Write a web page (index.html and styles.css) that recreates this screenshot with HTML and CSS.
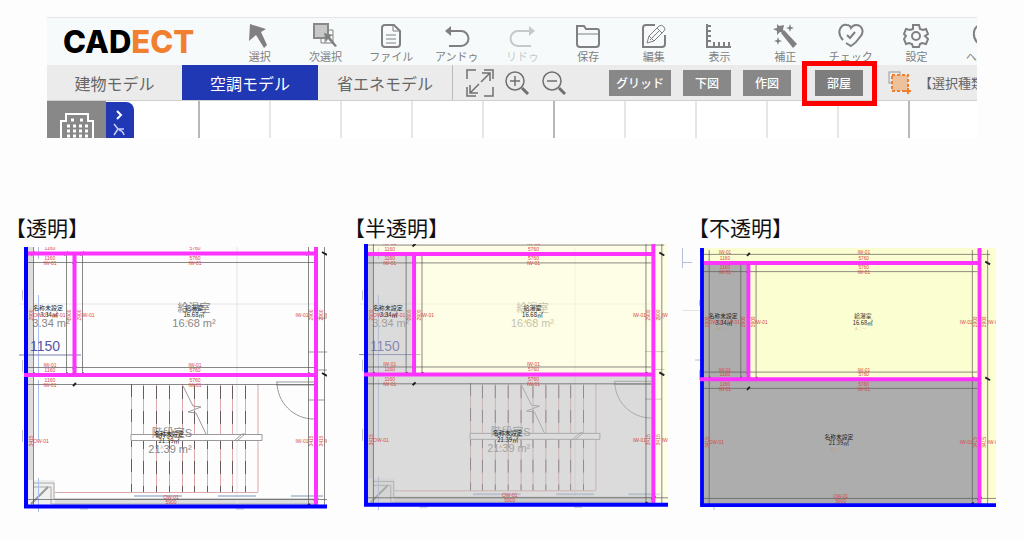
FILE: index.html
```html
<!DOCTYPE html>
<html lang="ja">
<head>
<meta charset="utf-8">
<title>CADECT</title>
<link rel="stylesheet" href="styles.css">
</head>
<body>
<section class="app">
  <header class="topbar">
    <h1 class="logo">CAD<span class="logo-accent">ECT</span></h1>
    <nav class="tools">
      <button class="tool"><svg class="tool-icon" viewBox="0 0 26 26"><path d="M3 1 19 6 14 9 20 22 17 25 9 12 2 18Z" class="solid"/></svg>選択</button>
      <button class="tool"><svg class="tool-icon" viewBox="0 0 26 26"><path d="M9 13v7h12V7h-4M13 20v-8h8" class="thin"/><rect x="2" y="1" width="14" height="14" fill="#c8c8c8" stroke="#888" stroke-width="2"/><path d="M12 10l8 2-2 2 7 9-2 1-7-8-2 3Z" class="solid"/></svg>次選択</button>
      <button class="tool"><svg class="tool-icon" viewBox="0 0 26 26"><path d="M7 2h9l6 6v13a3 3 0 0 1-3 3H7a3 3 0 0 1-3-3V5a3 3 0 0 1 3-3Z" class="line"/><path d="M15 2v6h6M8 12h10M8 16h10M8 20h10" class="thin"/></svg>ファイル</button>
      <button class="tool"><svg class="tool-icon" viewBox="0 0 26 26"><path d="M5 8h12a7 7 0 0 1 0 15H5" class="line"/><path d="M1 8 7 3v10Z" class="solid"/></svg>アンドゥ</button>
      <button class="tool tool-off" disabled><svg class="tool-icon" viewBox="0 0 26 26"><path d="M21 8H9a7 7 0 0 0 0 15h13" class="line"/><path d="M26 8 20 3v10Z" class="solid"/></svg>リドゥ</button>
      <button class="tool"><svg class="tool-icon" viewBox="0 0 26 26"><path d="M2 21V3h7l2 3h11a2 2 0 0 1 2 2v13a3 3 0 0 1-3 3H5a3 3 0 0 1-3-3Z" class="line"/><path d="M2 11h22" class="thin"/></svg>保存</button>
      <button class="tool"><svg class="tool-icon" viewBox="0 0 26 26"><path d="M14 2H5a3 3 0 0 0-3 3v19h19a3 3 0 0 0 3-3v-9" class="line"/><path d="M6 20l2-7L18 3q3-2 5 1 2 2 0 4L13 18ZM16 5l5 5M8 13l5 5M9 17l9-9" class="thin"/></svg>編集</button>
      <button class="tool"><svg class="tool-icon" viewBox="0 0 26 26"><path d="M1 1v23h24M1 3h4M1 8h4M1 13h4M1 18h4M8 24v-5M13 24v-5M18 24v-5M23 24v-5" class="line"/></svg>表示</button>
      <button class="tool"><svg class="tool-icon" viewBox="0 0 26 26"><path d="M9 10 12 7 25 21 21 25Z" class="solid"/><path d="M5 1l2 2 5-1-1 5 2 3-5-1-3 3V8L1 6l4-1ZM18 1l1 3 3 1-3 1-1 3-1-3-3-1 3-1ZM6 14l1 3 3 1-3 1-1 3-1-3-3-1 3-1Z" class="solid"/></svg>補正</button>
      <button class="tool"><svg class="tool-icon" viewBox="0 0 26 26"><path d="M5 17C-3 8 4 1 9 2q3 0 4 3 2-3 5-3c6 0 9 7 4 12q-4 6-9 9l-5-3" class="line"/><path d="M9 12l3 3 5-6" class="line"/></svg>チェック</button>
      <button class="tool"><svg class="tool-icon" viewBox="0 0 26 26"><path d="M10 2h6l1 4 3 1 3-1 2 5-3 2 3 3-2 5-4-1-2 1-1 3h-6l-1-3-3-1-3 1-2-5 2-3-2-2 2-5 4 1 3-1Z" class="line"/><circle cx="13" cy="13" r="4" class="line"/></svg>設定</button>
      <button class="tool"><svg class="tool-icon" viewBox="0 0 26 26"><path d="M9 24v-4C3 15 3 2 13 2s10 13 4 18v4Z" class="line"/></svg>ヘルプ</button>
    </nav>
  </header>
  <div class="modebar">
    <button class="tab">建物モデル</button>
    <button class="tab tab-active">空調モデル</button>
    <button class="tab tab-last">省エネモデル</button>
    <div class="views">
      <button class="view" aria-label="全体表示"><svg viewBox="0 0 28 28"><path d="M1 10V1h9M18 1h9v9M1 18v9h9M27 18v9h-9M15 13 24 4M16 4h8v8M13 15l-9 9M4 16v8h8"/></svg></button>
      <button class="view" aria-label="拡大"><svg viewBox="0 0 28 28"><circle cx="12" cy="12" r="9"/><path d="M7 12h10M12 7v10"/><path d="M19 19l6 6" stroke-width="3"/></svg></button>
      <button class="view" aria-label="縮小"><svg viewBox="0 0 28 28"><circle cx="12" cy="12" r="9"/><path d="M7 12h10"/><path d="M19 19l6 6" stroke-width="3"/></svg></button>
    </div>
    <div class="layers">
      <button class="layer layer-wide">グリッド</button>
      <button class="layer">下図</button>
      <button class="layer">作図</button>
      <button class="layer layer-marked">部屋</button>
    </div>
    <svg class="pick" viewBox="0 0 23 24"><rect x="1" y="1" width="11" height="11" fill="none" stroke="#999"/><rect x="4" y="4" width="16" height="16" fill="#ecc29c" stroke="#f08030" stroke-width="2" stroke-dasharray="3 2"/><path d="M17 20h6M20 17v6" stroke="#f08030" stroke-width="2"/></svg>
    <span class="pick-label">【選択種類</span>
  </div>
  <div class="stage">
    <div class="side"><svg class="building" viewBox="0 0 36 27"><path d="M2 27V9h5V2h22v7h5v18" fill="none" stroke="#fff" stroke-width="2"/><path d="M12 8h3M21 8h3M8 14h3M14 14h3M20 14h3M26 14h3M8 19h3M14 19h3M20 19h3M26 19h3M8 24h3M14 24h3M20 24h3M26 24h3" stroke="#fff" stroke-width="3"/></svg></div>
    <button class="drawer" aria-label="メニューを開く"><svg viewBox="0 0 28 36"><path d="M11 9l4 4-4 4" fill="none" stroke="#fff" stroke-width="2"/><path d="M8 22l4 5h6M12 27l-4 6M13 28q4 1 5 5" fill="none" stroke="#c8cff5" stroke-width="1.500"/></svg></button>
    <div class="gridlines"><i class="major"></i><i></i><i></i><i></i><i></i><i class="major"></i><i></i><i></i><i></i><i></i><i class="major"></i></div>
  </div>
</section>

<main class="samples">
  <figure class="sample">
    <figcaption>【透明】</figcaption>
    <svg class="plan" viewBox="5 244 339 270">
      <defs>
        <clipPath id="c1"><rect x="16" y="247" width="311" height="265"/></clipPath>
        <clipPath id="c2"><rect x="355" y="244" width="313" height="268"/></clipPath>
        <clipPath id="c3"><rect x="700" y="248" width="296" height="264"/></clipPath>
        <g id="under" fill="none" stroke="#777" stroke-width="1">
          <path d="M28 247h5v252h281v6H28Z" fill="#dedede" stroke="none"/>
          <path d="M28 480h27v25H28Z" fill="#f0f0f0" stroke="none"/>
          <path d="M33 483h21v16h260M33 487h18v17h263" stroke="#aaa"/>
          <path d="M237 247v257M20 304h294" stroke="#e4e4e4"/>
          <path d="M31 504 48 487" stroke="#999" stroke-width="2"/>
          <path d="M38.500 247v12M38.500 295v80M38.500 380v60M38.500 478v34" stroke="#aac0ec"/>
          <path d="M19 355h62" stroke="#777fb0"/>
          <path d="M134 496h48M218 496h38M291 496h32" stroke="#bac9dc" stroke-width="2"/>
          <path d="M55 492.500h203M131.500 384v108M143.500 384v108M156.500 384v108M169.500 384v108M182.500 384v108M194.500 384v108M207.500 384v108M220.500 384v108M232.500 384v108M245.500 384v108M258 384v108" stroke="#dcaaaa"/>
          <path d="M131.500 384v108M143.500 386v106M156.500 386v106M169.500 386v106M182.500 386v106M194.500 386v106M207.500 386v106M220.500 386v106M232.500 386v106M245.500 386v106" stroke="#6a5a60" stroke-dasharray="13 12"/>
          <path d="M131 434.500h131v6H131Z" fill="#fff" stroke="#999"/>
          <path d="M234 441l8-7h3l-8 7" stroke="#999"/>
          <path d="M183 386l10 20 8 1-13 5 8 1 10 21M276 382h38M276 385h38M277 382c0 20 16 37 37 37M308 400h16M308 352h19M318 318h9M318 370h9" stroke="#999"/>
          <path d="M22.500 290v10M22.500 360v12M22.500 430v12M80 509h8M236 509h8" stroke="#c0c0d0"/>
        </g>
        <g id="dims">
          <path d="M26 244.500h301M26 262.500h288M26 367.500h288M26 384.500h288M33.500 240v266M66.500 253v122M82.500 253v122M308.500 240v266M324.500 240v266M28 499.500h306" fill="none" stroke="#555" stroke-width="1" opacity=".7"/>
          <path d="M73 246l3-3M73 264l3-3M73 369l3-3M73 386l3-3M64 255l4-3M64 376l4-3M80 255l4-3M80 376l4-3M31 255l4-3M31 376l4-3M306 255l4-3M306 376l4-3M322 252l5 3M322 373l5 3M314 501l4-3M306 507l4-3" stroke="#222" stroke-width="2"/>
        </g>
        <g id="walls" fill="none" stroke-width="4">
          <path d="M26 240v266" stroke="#0000ff"/>
          <path d="M28 253.500H316M24 375H316M74.500 254V375M316 240V506" stroke="#ff33ff"/>
          <path d="M24 506.500H334" stroke="#0000ff"/>
        </g>
        <g id="marks" class="marks">
          <text x="50" y="244">IW-01</text><text x="50" y="250">1160</text><text x="50" y="260">1160</text><text x="50" y="265">IW-01</text>
          <text x="195" y="244">IW-01</text><text x="195" y="250">5760</text><text x="195" y="260">5760</text><text x="195" y="265">IW-01</text>
          <text x="50" y="367">IW-01</text><text x="50" y="372">1160</text><text x="50" y="382">1160</text><text x="50" y="387">IW-01</text>
          <text x="195" y="367">IW-01</text><text x="195" y="372">5760</text><text x="195" y="382">5760</text><text x="195" y="387">IW-01</text>
          <text x="171" y="499">OW-01</text><text x="171" y="504">5900</text>
          <text x="41" y="317">OW-01</text><text x="59" y="317">IW-01</text><text x="88" y="317">IW-01</text><text x="302" y="317">IW-01</text><text x="331" y="317">IW-01</text>
          <text x="41" y="443">OW-01</text><text x="302" y="443">IW-01</text><text x="331" y="443">IW-01</text>
          <text transform="translate(33 315) rotate(-90)">2900</text><text transform="translate(71 315) rotate(-90)">2900</text><text transform="translate(81 315) rotate(-90)">2900</text><text transform="translate(313 315) rotate(-90)">2900</text><text transform="translate(323 315) rotate(-90)">2900</text>
          <text transform="translate(33 441) rotate(-90)">3415</text><text transform="translate(313 441) rotate(-90)">3415</text><text transform="translate(323 441) rotate(-90)">3415</text>
        </g>
      </defs>
      <g clip-path="url(#c1)">
        <use href="#under"/>
        <g class="ghost"><text x="51" y="327">3.34 m²</text><text x="194" y="312">給湯室</text><text x="194" y="327">16.68 m²</text><text x="172" y="437">階段室S</text><text x="170" y="453">21.39 m²</text></g>
        <text x="45" y="351" class="size">1150</text>
        <use href="#dims"/><use href="#marks"/>
        <g class="room"><text x="48" y="310">名称未設定</text><text x="49" y="317">3.34㎡</text><text x="194" y="310">給湯室</text><text x="194" y="317">16.68㎡</text><text x="169" y="436">名称未設定</text><text x="169" y="443">21.39㎡</text></g>
        <g class="hint"><text x="47" y="323">人：…</text><text x="191" y="323">人：…</text><text x="166" y="449">人：…</text></g>
        <use href="#walls"/>
      </g>
    </svg>
  </figure>
  <figure class="sample">
    <figcaption>【半透明】</figcaption>
    <svg class="plan" viewBox="344 244 338 270">
      <g clip-path="url(#c2)"><g transform="translate(366 254) scale(.991) translate(-26 -253.500)">
        <use href="#under"/>
        <g class="ghost"><text x="51" y="327">3.34 m²</text><text x="194" y="312">給湯室</text><text x="194" y="327">16.68 m²</text><text x="172" y="437">階段室S</text><text x="170" y="453">21.39 m²</text></g>
        <text x="45" y="351" class="size">1150</text>
        <path d="M26 240h310v266H316V375H75V254H26Z" fill="#fffed0" opacity=".5"/>
        <path d="M26 254h48v121h242v131H26Z" fill="#b9b9b9" opacity=".5"/>
        <use href="#dims"/><use href="#marks"/>
        <g class="room"><text x="48" y="310">名称未設定</text><text x="49" y="317">3.34㎡</text><text x="194" y="310">給湯室</text><text x="194" y="317">16.68㎡</text><text x="169" y="436">名称未設定</text><text x="169" y="443">21.39㎡</text></g>
        <g class="hint"><text x="47" y="323">人：…</text><text x="191" y="323">人：…</text><text x="166" y="449">人：…</text></g>
        <use href="#walls"/>
      </g></g>
    </svg>
  </figure>
  <figure class="sample sample-opaque">
    <figcaption>【不透明】</figcaption>
    <svg class="plan" viewBox="682 244 339 270">
      <path d="M682 262.500h10M682.500 248v20M695 360h5M699.500 300v6M699.500 370v10M714 504v6" fill="none" stroke="#b4c0da"/>
      <path d="M682 310.500h18" stroke="#e4e4e4"/>
      <g clip-path="url(#c3)"><g transform="translate(702 263) scale(.957) translate(-26 -253.500)">
        <path d="M26 230h312v276H316V375H75V254H26Z" fill="#fbfed0"/>
        <path d="M26 254h48v121h242v131H26Z" fill="#adadad"/>
        <path d="M26 230v12" stroke="#00f" stroke-width="4"/><path d="M316 230v12" stroke="#f3f" stroke-width="4"/>
        <use href="#dims"/><use href="#marks"/>
        <g class="room"><text x="48" y="311">名称未設定</text><text x="49" y="318">3.34㎡</text><text x="194" y="311">給湯室</text><text x="194" y="318">16.68㎡</text><text x="169" y="437">名称未設定</text><text x="169" y="444">21.39㎡</text></g>
        <g class="hint"><text x="47" y="324">人：…</text><text x="191" y="324">人：…</text><text x="166" y="450">人：…</text></g>
        <use href="#walls"/>
      </g></g>
    </svg>
  </figure>
</main>
</body>
</html>
```
FILE: styles.css
```css
* { box-sizing: border-box; }
body {
  margin: 0;
  padding-top: 17px;
  background: #fdfdfd;
  font-family: "Noto Sans CJK JP", sans-serif;
}
button {
  margin: 0;
  padding: 0;
  border: 0;
  background: none;
  font: inherit;
  color: inherit;
}
svg { display: block; }

.app { margin: 0 47px; overflow: hidden; }

.topbar {
  display: flex;
  height: 48px;
  background: #f7fafb;
  border-top: 1px solid #e6e6e6;
}
.logo {
  flex: 0 0 180px;
  margin: 0;
  padding-left: 16px;
  font: 800 31px/48px Inter, sans-serif;
  color: #000;
}
.logo-accent { color: #f08030; }
.tools {
  flex: 1;
  display: grid;
  grid-template-columns: repeat(12, 1fr);
  margin-right: -38px;
}
.tool {
  display: flex;
  flex-direction: column;
  align-items: center;
  padding-top: 5px;
  font-size: 11px;
  line-height: 15px;
  color: #808080;
  white-space: nowrap;
}
.tool-off { opacity: .4; }
.tool-icon { width: 26px; height: 26px; }
.solid { fill: #808080; }
.line { fill: none; stroke: #808080; stroke-width: 2; }
.thin { fill: none; stroke: #808080; stroke-width: 1; }

.modebar {
  display: flex;
  align-items: center;
  height: 36px;
  background: #ebebeb;
  border-bottom: 1px solid #cfcfcf;
  color: #666;
}
.tab {
  flex: 0 0 135px;
  align-self: stretch;
  font-size: 16px;
  line-height: 34px;
}
.tab-active { flex-basis: 136px; background: #2038b4; color: #fff; }
.tab-last { border-right: 1px solid #bbb; }
.views { display: flex; flex: none; gap: 9px; margin-left: 13px; }
.view { width: 28px; height: 28px; flex: none; }
.view svg { fill: none; stroke: #707070; stroke-width: 1.5; }
.layers { display: flex; flex: none; gap: 12px; margin-left: 41px; }
.layer {
  width: 48px;
  height: 26px;
  background: #888;
  color: #fff;
  font-size: 12px;
  font-weight: 500;
  line-height: 24px;
}
.layer-wide { width: 62px; }
.layer-marked { position: relative; margin-left: 12px; background: #7d7d7d; }
.layer-marked::after {
  content: "";
  position: absolute;
  inset: -9px -14px -10px -13px;
  border: 5px solid #f00;
  z-index: 1;
}
.pick { flex: none; width: 23px; height: 24px; margin-left: 25px; }
.pick-label { margin-left: 8px; font-size: 13px; white-space: nowrap; }

.stage { display: flex; height: 37px; background: #fff; }
.side { flex: 0 0 59px; padding: 11px 0 0 12px; background: #888; }
.building { width: 36px; height: 27px; }
.drawer {
  flex: 0 0 28px;
  margin-top: 1px;
  background: #2038b4;
  border-radius: 0 8px 0 0;
}
.gridlines { flex: 1; display: flex; padding-left: 64px; }
.gridlines i { flex: 0 0 71px; border-left: 2px solid #e4e6e7; }
.gridlines .major { border-left-color: #b8b8b8; }

.samples {
  display: grid;
  grid-template-columns: 339fr 338fr 339fr;
  margin-top: 75px;
  padding: 0 3px 0 5px;
}
.sample { margin: 0; }
.sample figcaption {
  font-size: 21px;
  line-height: 28px;
  color: #111;
  white-space: nowrap;
}
.sample-opaque figcaption { padding-left: 6px; }
.plan { width: 100%; height: auto; margin-top: 3px; }
.plan text { text-anchor: middle; }
.marks { font: 5px "Liberation Sans", sans-serif; fill: #d84848; }
.ghost { font: 11px "Liberation Sans", "Noto Sans CJK JP", sans-serif; fill: #888; }
.size { font: 14px "Liberation Sans", sans-serif; fill: #5558a8; }
.room { font: 6px "Noto Sans CJK JP", sans-serif; fill: #222; }
.hint { font: 4px "Noto Sans CJK JP", sans-serif; fill: #c98a3a; }
```
